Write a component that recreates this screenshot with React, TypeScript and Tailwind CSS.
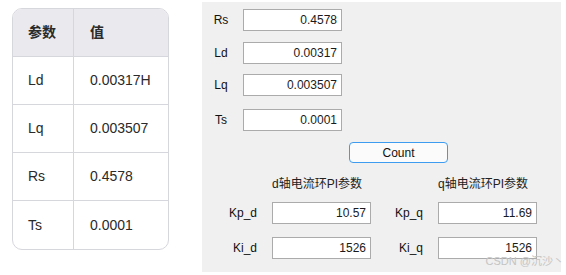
const rows = [
  { name: "Ld", value: "0.00317H" },
  { name: "Lq", value: "0.003507" },
  { name: "Rs", value: "0.4578" },
  { name: "Ts", value: "0.0001" },
];

const motorInputs = [
  { label: "Rs", value: "0.4578", mt: "mt-[7px]" },
  { label: "Ld", value: "0.00317", mt: "mt-[11px]" },
  { label: "Lq", value: "0.003507", mt: "mt-[10px]" },
  { label: "Ts", value: "0.0001", mt: "mt-[13px]" },
];

const font = "font-['Liberation_Sans','Noto_Sans_CJK_SC',sans-serif]";

function Field({ value }: { value: string }) {
  return (
    <div className="w-[99px] h-[22px] bg-white border border-[#ababab] flex items-center justify-end pr-[4px] text-[12px] text-[#1a1a1a]">
      {value}
    </div>
  );
}

function PiGroup({ axis, kp, ki, labelW }: { axis: string; kp: string; ki: string; labelW: string }) {
  return (
    <div className="flex flex-col">
      <div className={`h-[14px] mt-[175px] text-[12px] text-[#222] leading-[14px] ${labelW === "w-[55px]" ? "ml-[70px]" : "ml-[67px]"}`}>
        {axis}轴电流环PI参数
      </div>
      <div className="flex items-center mt-[11px]">
        <div className={`${labelW} text-right text-[12px] text-[#111]`}>{`Kp_${axis}`}</div>
        <div className="ml-[15px]">
          <Field value={kp} />
        </div>
      </div>
      <div className="flex items-center mt-[13px]">
        <div className={`${labelW} text-right text-[12px] text-[#111]`}>{`Ki_${axis}`}</div>
        <div className="ml-[15px]">
          <Field value={ki} />
        </div>
      </div>
    </div>
  );
}

export default function App() {
  return (
    <div className={`relative w-[566px] h-[275px] bg-white flex ${font}`}>
      {/* parameter table */}
      <div className="ml-[12px] mt-[8px] w-[157px] h-[242px] border border-[#d6d6dd] rounded-[10px] overflow-hidden text-[14px] text-[#2a2a2a]">
        <div className="flex h-[48px] bg-[#e9e9ee] border-b border-[#d6d6dd] font-bold">
          <div className="w-[61px] border-r border-[#d6d6dd] flex items-center pl-[15px]">参数</div>
          <div className="flex-1 flex items-center pl-[16px]">值</div>
        </div>
        {rows.map((r, i) => (
          <div
            key={r.name}
            className={`flex h-[48px] ${i < rows.length - 1 ? "border-b border-[#d6d6dd]" : ""}`}
          >
            <div className="w-[61px] border-r border-[#d6d6dd] flex items-center pl-[15px]">{r.name}</div>
            <div className="flex-1 flex items-center pl-[16px]">{r.value}</div>
          </div>
        ))}
      </div>

      {/* matlab-style panel */}
      <div className="ml-[33px] mt-[2px] w-[359px] h-[270px] bg-[#f0f0f0] relative">
        <div className="flex flex-col">
          {motorInputs.map((m) => (
            <div key={m.label} className={`flex items-center ${m.mt}`}>
              <div className="ml-[4px] w-[30px] text-center text-[12px] text-[#111]">{m.label}</div>
              <div className="ml-[7px]">
                <Field value={m.value} />
              </div>
            </div>
          ))}
        </div>

        <div className="absolute left-[147px] top-[140px] w-[99px] h-[21px] rounded-[4px] border border-[#3d9cf0] bg-[#fbfbfb] flex items-center justify-center text-[12px] text-[#111]">
          Count
        </div>

        <div className="absolute inset-0 flex">
          <PiGroup axis="d" kp="10.57" ki="1526" labelW="w-[55px]" />
          <PiGroup axis="q" kp="11.69" ki="1526" labelW="w-[52px]" />
        </div>
      </div>

      <div className="absolute right-[2px] bottom-[6px] text-[11px] text-[#c4c4c4]">CSDN @沉沙丶</div>
    </div>
  );
}
